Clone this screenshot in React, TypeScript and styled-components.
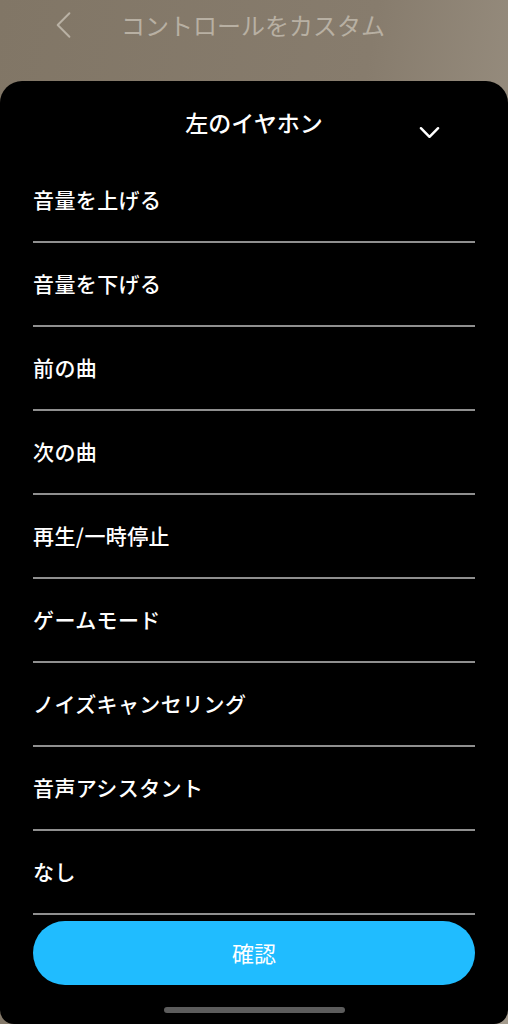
import styled, { createGlobalStyle } from 'styled-components';

const GlobalStyle = createGlobalStyle`
  html, body {
    margin: 0;
    padding: 0;
    background: #000;
  }
  body {
    font-family: "Noto Sans CJK JP", "Noto Sans", sans-serif;
  }
  * { box-sizing: border-box; }
`;

const items = [
  '音量を上げる',
  '音量を下げる',
  '前の曲',
  '次の曲',
  '再生/一時停止',
  'ゲームモード',
  'ノイズキャンセリング',
  '音声アシスタント',
  'なし',
];

const App = () => {
  return (
    <>
      <GlobalStyle />
      <Page>
        <TopBar>
          <BackIcon viewBox="0 0 20 30">
            <path d="M16 2 L3 15 L16 28" fill="none" stroke="#b9b1a4" strokeWidth="2.2" strokeLinecap="round" strokeLinejoin="round" />
          </BackIcon>
          <TopTitle>コントロールをカスタム</TopTitle>
        </TopBar>
        <Sheet>
          <SheetHeader>
            <span />
            <SheetTitle>左のイヤホン</SheetTitle>
            <ChevronIcon viewBox="0 0 22 13">
              <path d="M2 2 L11 11 L20 2" fill="none" stroke="#fff" strokeWidth="2.6" strokeLinecap="round" strokeLinejoin="round" />
            </ChevronIcon>
          </SheetHeader>
          <List>
            {items.map((label) => (
              <Row key={label}>{label}</Row>
            ))}
          </List>
          <ConfirmButton>確認</ConfirmButton>
          <HomeIndicator />
        </Sheet>
      </Page>
    </>
  );
};

export default App;

const Page = styled.div`
  width: 508px;
  height: 1024px;
  display: flex;
  flex-direction: column;
  background: linear-gradient(100deg, #817666 0%, #877c6d 55%, #a49b8d 100%);
  overflow: hidden;
`;

const TopBar = styled.div`
  height: 81px;
  flex-shrink: 0;
  display: flex;
  align-items: flex-start;
  padding: 10px 0 0 55px;
  gap: 48px;
`;

const BackIcon = styled.svg`
  width: 18px;
  height: 30px;
`;

const TopTitle = styled.div`
  font-size: 24px;
  line-height: 30px;
  color: #b8b0a3;
  font-weight: 400;
`;

const Sheet = styled.div`
  flex: 1;
  background: #000;
  border-radius: 22px 22px 14px 14px;
  display: flex;
  flex-direction: column;
  align-items: center;
  color: #fff;
`;

const SheetHeader = styled.div`
  width: 100%;
  height: 78px;
  display: grid;
  grid-template-columns: 1fr auto 1fr;
  padding-top: 28px;
`;

const SheetTitle = styled.div`
  font-size: 23px;
  line-height: 26px;
  font-weight: 500;
`;

const ChevronIcon = styled.svg`
  width: 21px;
  height: 13px;
  justify-self: end;
  margin: 17px 68px 0 0;
`;

const List = styled.div`
  width: 100%;
  padding: 0 33px;
  display: flex;
  flex-direction: column;
`;

const Row = styled.div`
  height: 84px;
  padding-top: 27px;
  font-size: 21px;
  line-height: 26px;
  font-weight: 500;
  letter-spacing: 0.4px;
  border-bottom: 2px solid #8f8f8f;
`;

const ConfirmButton = styled.button`
  width: 442px;
  height: 64px;
  margin-top: 6px;
  padding: 0 0 3px;
  border: none;
  border-radius: 32px;
  background: #20bcff;
  color: #fff;
  font-family: inherit;
  font-size: 22px;
  font-weight: 400;
  line-height: 1;
`;

const HomeIndicator = styled.div`
  width: 181px;
  height: 6px;
  margin-top: 22px;
  border-radius: 3px;
  background: #5c5c5c;
`;
